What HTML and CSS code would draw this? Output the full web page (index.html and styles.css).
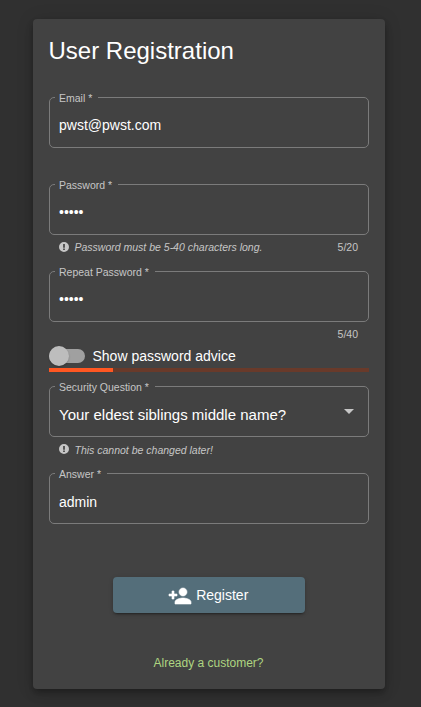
FILE: index.html
```html
<!DOCTYPE html>
<html lang="en">
<head>
<meta charset="utf-8">
<title>User Registration</title>
<link rel="stylesheet" href="styles.css">
</head>
<body>
<main class="card">
  <h1 class="title">User Registration</h1>

  <div class="field">
    <div class="outline"><span class="label">Email *</span><span class="value">pwst@pwst.com</span></div>
    <div class="hint"></div>
  </div>

  <div class="field">
    <div class="outline"><span class="label">Password *</span><span class="value">•••••</span></div>
    <div class="hint">
      <svg class="hint-icon" viewBox="0 0 24 24"><path fill-rule="evenodd" d="M12 2a10 10 0 1 0 0 20a10 10 0 1 0 0-20zM10.300 6h3.400v7.500h-3.400zM10.300 15h3.400v3h-3.400z"/></svg>
      <em>Password must be 5-40 characters long.</em><span class="count">5/20</span>
    </div>
  </div>

  <div class="field">
    <div class="outline"><span class="label">Repeat Password *</span><span class="value">•••••</span></div>
    <div class="hint short"><span class="count">5/40</span></div>
  </div>

  <div class="toggle">
    <span class="track"><span class="thumb"></span></span>
    <span>Show password advice</span>
  </div>
  <div class="strength"><div class="strength-fill"></div></div>

  <div class="field">
    <div class="outline select">
      <span class="label">Security Question *</span>
      <span class="value">Your eldest siblings middle name?<span class="arrow"></span></span>
    </div>
    <div class="hint low">
      <svg class="hint-icon" viewBox="0 0 24 24"><path fill-rule="evenodd" d="M12 2a10 10 0 1 0 0 20a10 10 0 1 0 0-20zM10.300 6h3.400v7.500h-3.400zM10.300 15h3.400v3h-3.400z"/></svg>
      <em>This cannot be changed later!</em>
    </div>
  </div>

  <div class="field">
    <div class="outline answer"><span class="label">Answer *</span><span class="value">admin</span></div>
  </div>

  <button class="register" type="button">
    <svg class="person" viewBox="0 0 24 24"><path d="M15 12c2.210 0 4-1.790 4-4s-1.790-4-4-4-4 1.790-4 4 1.790 4 4 4zm-9-2V7H4v3H1v2h3v3h2v-3h3v-2H6zm9 4c-2.670 0-8 1.340-8 4v2h16v-2c0-2.660-5.330-4-8-4z"/></svg>
    <span>Register</span>
  </button>
  <a class="login">Already a customer?</a>
</main>
</body>
</html>
```
FILE: styles.css
```css
* { box-sizing: border-box; }

body {
  margin: 0;
  min-height: 707px;
  padding: 19px 0 0 33px;
  background: #303030;
  color: #fff;
  font-family: "Liberation Sans", Arial, sans-serif;
  font-size: 14px;
}

.card {
  display: flex;
  flex-direction: column;
  width: 352px;
  height: 670px;
  padding: 16px;
  border-radius: 4px;
  background: #424242;
  box-shadow: 0 3px 5px -1px rgba(0, 0, 0, .2), 0 6px 10px rgba(0, 0, 0, .14), 0 1px 18px rgba(0, 0, 0, .12);
}

.title {
  margin: 0 0 30px -.5px;
  font-size: 24px;
  font-weight: 400;
  line-height: 32px;
}

.outline {
  display: flex;
  flex-direction: column;
  height: 51px;
  border: 1px solid #7b7b7b;
  border-radius: 5px;
}

.label {
  align-self: flex-start;
  height: 12px;
  margin: -6px 0 0 5px;
  padding: 0 6px 0 4px;
  background: #424242;
  color: #c6c6c6;
  font-size: 10.5px;
  line-height: 13px;
}

.value {
  display: flex;
  padding: 13px 14px 0 9px;
  line-height: 16px;
}

.answer .value { padding-top: 14px; }

.select .value {
  justify-content: space-between;
  padding-top: 14px;
  font-size: 15px;
}

.arrow {
  margin-top: 2px;
  height: 5px;
  border: 5px solid transparent;
  border-top-color: #c6c6c6;
  border-bottom: 0;
}

.hint {
  display: flex;
  align-items: flex-start;
  height: 36px;
  padding: 6px 11px 0 9px;
  color: #c6c6c6;
  font-size: 10.5px;
  line-height: 13px;
}

.hint.short { height: 24px; }

.hint.low em { margin-top: 1px; }

.hint-icon {
  width: 12px;
  height: 12px;
  margin: 0 4.5px 0 0;
  fill: #c6c6c6;
}

.count { margin-left: auto; }

.toggle {
  display: flex;
  align-items: center;
  gap: 7.5px;
  height: 20px;
}

.track {
  display: flex;
  align-items: center;
  width: 36px;
  height: 14px;
  border-radius: 7px;
  background: #a0a0a0;
}

.thumb {
  width: 20px;
  height: 20px;
  border-radius: 50%;
  background: #bdbdbd;
  box-shadow: 0 1px 2px rgba(0, 0, 0, .2);
}

.strength {
  height: 4px;
  margin: 2px 0 14px;
  background: #693a2a;
}

.strength-fill {
  width: 20%;
  height: 4px;
  background: #ff5722;
}

.register {
  display: flex;
  align-items: center;
  justify-content: center;
  align-self: center;
  gap: 4px;
  width: 192px;
  height: 36px;
  margin-top: 53px;
  padding: 0 1.5px 0 0;
  border: 0;
  border-radius: 4px;
  background: #546e7a;
  color: #fff;
  font: inherit;
  box-shadow: 0 3px 1px -2px rgba(0, 0, 0, .2), 0 2px 2px rgba(0, 0, 0, .14), 0 1px 5px rgba(0, 0, 0, .12);
}

.person {
  width: 24px;
  height: 24px;
  margin-top: 2px;
  fill: #fff;
  stroke: #fff;
  stroke-width: .6;
}

.login {
  align-self: center;
  margin: 43px 1px 0 0;
  color: #aed581;
  font-size: 12px;
  line-height: 14px;
}
```
